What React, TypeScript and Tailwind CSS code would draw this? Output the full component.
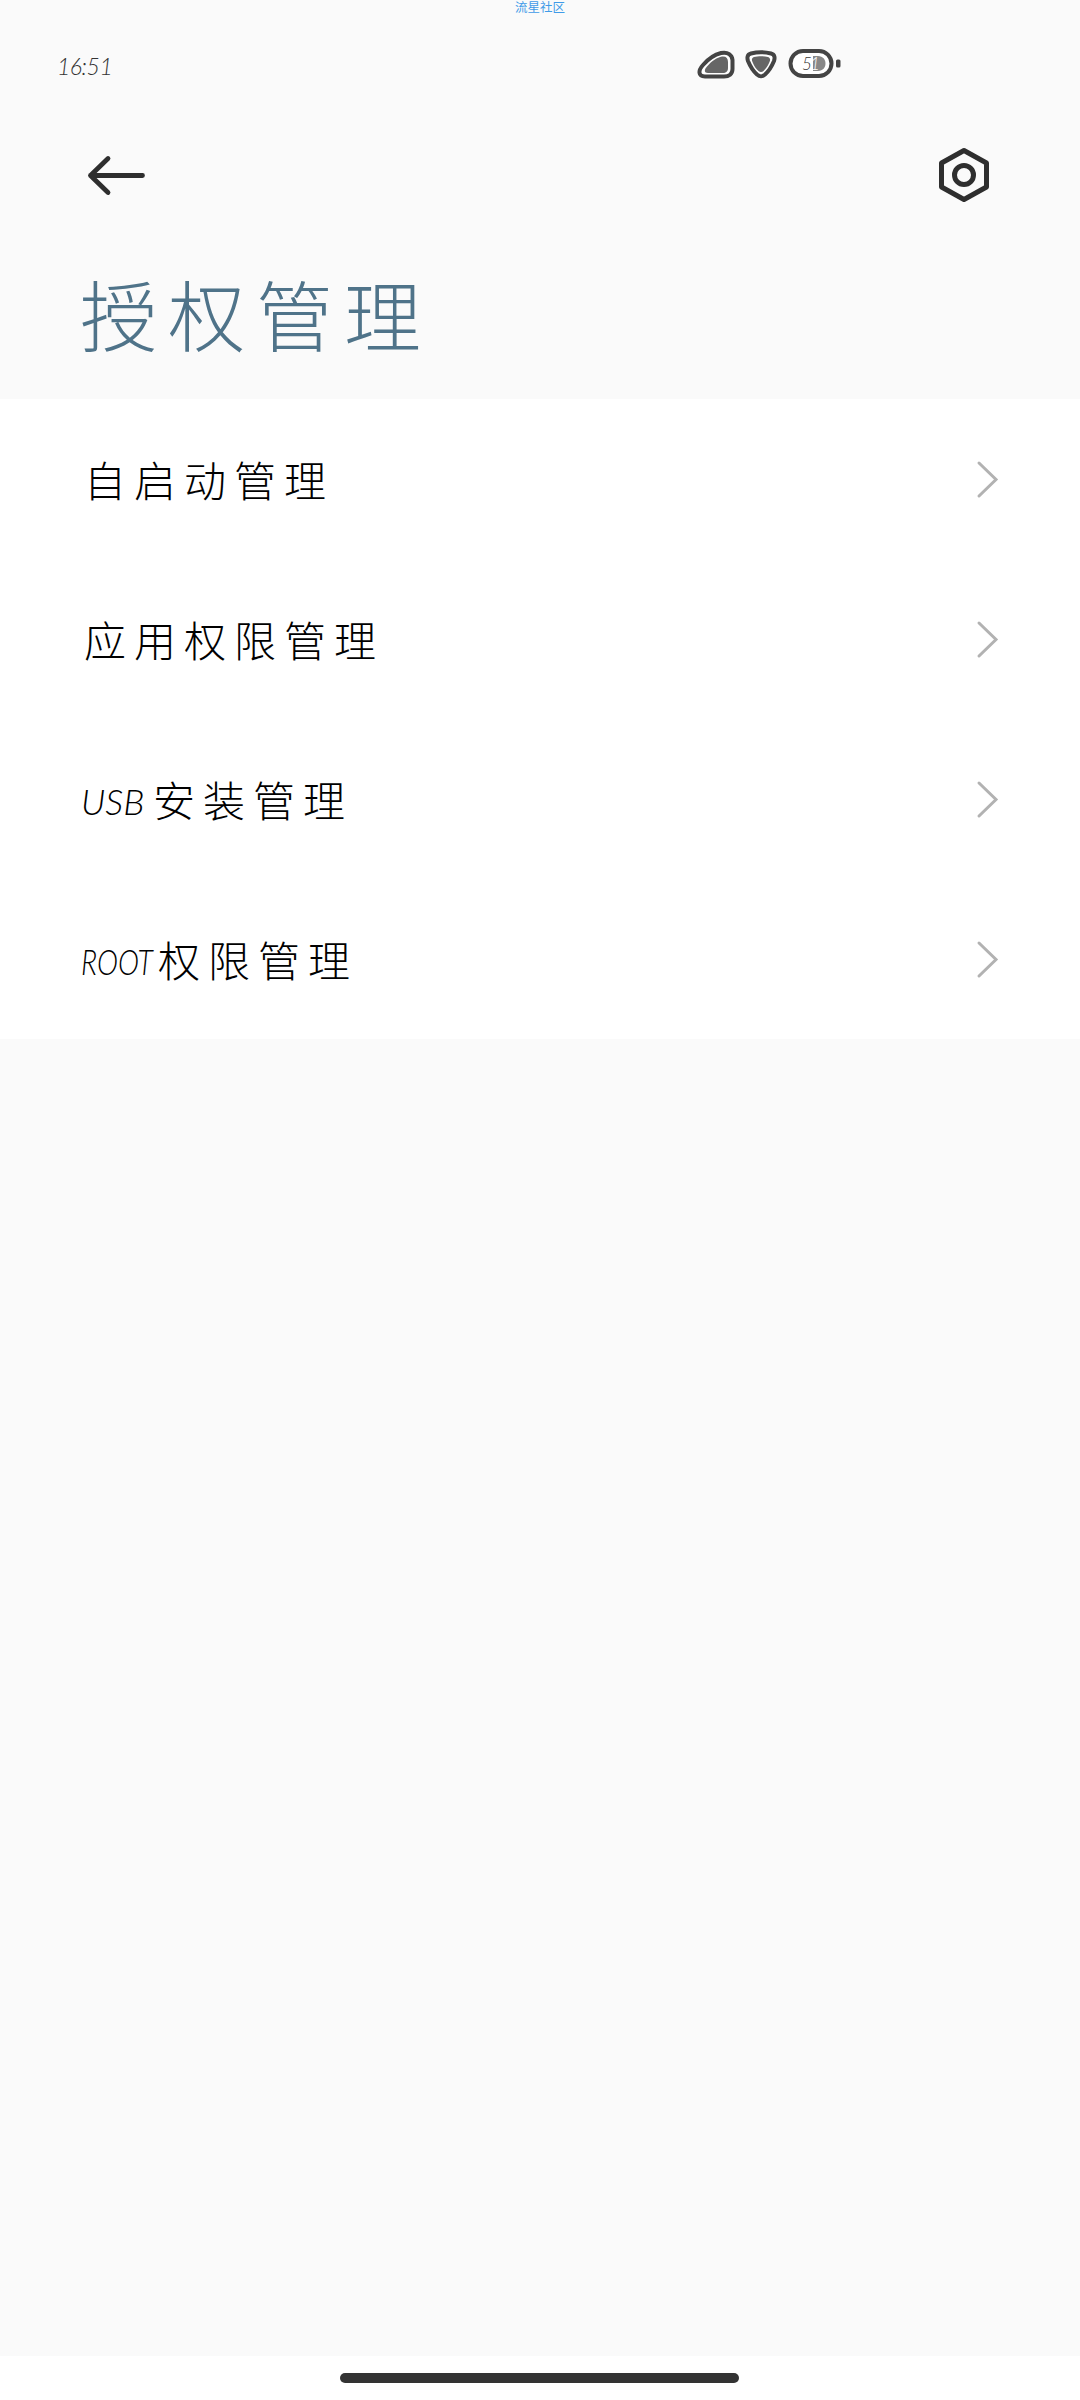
import { ReactNode } from "react";

interface MenuRowProps {
  latin?: string;
  label: string;
  latinClass?: string;
}

const rows: MenuRowProps[] = [
  { label: "自启动管理" },
  { label: "应用权限管理" },
  { latin: "USB", label: "安装管理", latinClass: "w-[69px]" },
  {
    latin: "ROOT",
    label: "权限管理",
    latinClass: "w-[74px] origin-left scale-x-[0.79]",
  },
];

export default function App() {
  return (
    <div className="relative flex flex-col w-[1080px] h-[2400px] overflow-hidden bg-[#fafafa] font-['Lato','Noto_Sans_CJK_SC',sans-serif] font-light text-black">
      <div className="absolute top-0 left-0 w-full text-center text-[12.5px] leading-[15px] font-normal text-[#3f9be8]">
        流星社区
      </div>
      <header className="flex flex-col h-[399px]">
        <StatusBar />
        <div className="flex items-center justify-between h-[94px] pl-[85px] pr-[88px]">
          <BackIcon />
          <SettingsIcon />
        </div>
        <h1 className="pl-[80px] pt-[46px] text-[77px] leading-[96px] tracking-[11px] text-[#4f7389]">
          授权管理
        </h1>
      </header>
      <main className="flex flex-col bg-white">
        {rows.map((row) => (
          <MenuRow key={row.label} {...row} />
        ))}
      </main>
      <footer className="flex justify-center mt-auto h-[44px] pt-[17px] pr-[2px] bg-white">
        <div className="w-[399px] h-[10px] rounded-full bg-[#333333]"></div>
      </footer>
    </div>
  );
}

function MenuRow({ latin, label, latinClass }: MenuRowProps) {
  return (
    <div className="flex items-center justify-between h-[160px] pl-[81px] pr-[80px]">
      <div className="flex items-center pt-[4px] text-[42px] leading-[60px]">
        {latin && (
          <span className={`text-[36px] italic whitespace-nowrap ${latinClass}`}>
            {latin}
          </span>
        )}
        <span className="tracking-[8px] pl-[3px]">{label}</span>
      </div>
      <Icon width={24} height={40}>
        <path
          d="M3 4L20 20.5L3 37"
          stroke="#b2b2b2"
          strokeWidth="3"
          strokeLinecap="round"
        />
      </Icon>
    </div>
  );
}

function StatusBar() {
  return (
    <div className="flex items-start h-[128px] pl-[57px] pt-[48px]">
      <div className="w-[638px] pt-[3px] text-[23px] leading-[30px] tracking-[-0.5px] italic text-[#333333]">
        16:51
      </div>
      <div className="flex items-start">
        <SignalIcon />
        <WifiIcon />
        <Battery />
      </div>
    </div>
  );
}

function Icon({
  width,
  height,
  children,
}: {
  width: number;
  height: number;
  children: ReactNode;
}) {
  return (
    <svg
      width={width}
      height={height}
      viewBox={`0 0 ${width} ${height}`}
      fill="none"
      className="shrink-0"
    >
      {children}
    </svg>
  );
}

function SignalIcon() {
  return (
    <Icon width={48} height={32}>
      <path
        d="M8 17C14 10 20 6.500 26 5C33 3.500 37 7 37.500 12V21C37.500 26 34 28.500 29 28.500H10C3 28.500 3 22.500 8 17Z"
        fill="#fff"
        stroke="#444444"
        strokeWidth="4"
      />
      <path
        d="M12 18.500C17 12.500 22 9.500 27 8.500C31 8 33 10 33 14V20C33 23.500 31 25 28 25H13C9 25 9 21.500 12 18.500Z"
        fill="#666666"
      />
    </Icon>
  );
}

function WifiIcon() {
  return (
    <Icon width={42} height={32}>
      <path
        d="M8 5.500C14 4 22 4 28 5.500C32 6.500 32 10 31 13C28.500 19 26 23 22 26.500C19 29 17 29 14 26.500C10 23 7.500 19 5 13C4 10 4 6.500 8 5.500Z"
        fill="#fff"
        stroke="#444444"
        strokeWidth="4"
      />
      <path
        d="M11 9C15 8 21 8 25 9C27.500 10 27.500 12 26.500 14C25 18 22.500 21 20.500 23C19 24.300 17 24.300 15.500 23C13 21 11 18 9.500 14C8.500 12 8.500 10 11 9Z"
        fill="#666666"
      />
    </Icon>
  );
}

function Battery() {
  return (
    <Icon width={60} height={32}>
      <rect
        x="5.500"
        y="3"
        width="41"
        height="25"
        rx="12.500"
        fill="#fff"
        stroke="#444444"
        strokeWidth="4"
      />
      <path d="M28 8H33C43 8 43 23 33 23H28Z" fill="#888888" />
      <text x="17" y="22" fontSize="17" fontStyle="italic" fill="#333333">
        5
      </text>
      <text x="25" y="22" fontSize="17" fontStyle="italic" fill="#ffffff">
        1
      </text>
      <rect x="51" y="11.500" width="4.500" height="8" rx="1.500" fill="#444444" />
    </Icon>
  );
}

function BackIcon() {
  return (
    <Icon width={64} height={60}>
      <path
        d="M5.500 30.500H57.500M23 13.500L5.500 30.500L23 47.500"
        stroke="#2e2e2e"
        strokeWidth="4.800"
        strokeLinecap="round"
        strokeLinejoin="round"
      />
    </Icon>
  );
}

function SettingsIcon() {
  return (
    <Icon width={56} height={60}>
      <path
        d="M28 5.500L50.500 18V42L28 54.500L5.500 42V18Z"
        stroke="#2e2e2e"
        strokeWidth="5"
        strokeLinejoin="round"
      />
      <circle cx="28" cy="30" r="9.500" stroke="#2e2e2e" strokeWidth="5" />
    </Icon>
  );
}
